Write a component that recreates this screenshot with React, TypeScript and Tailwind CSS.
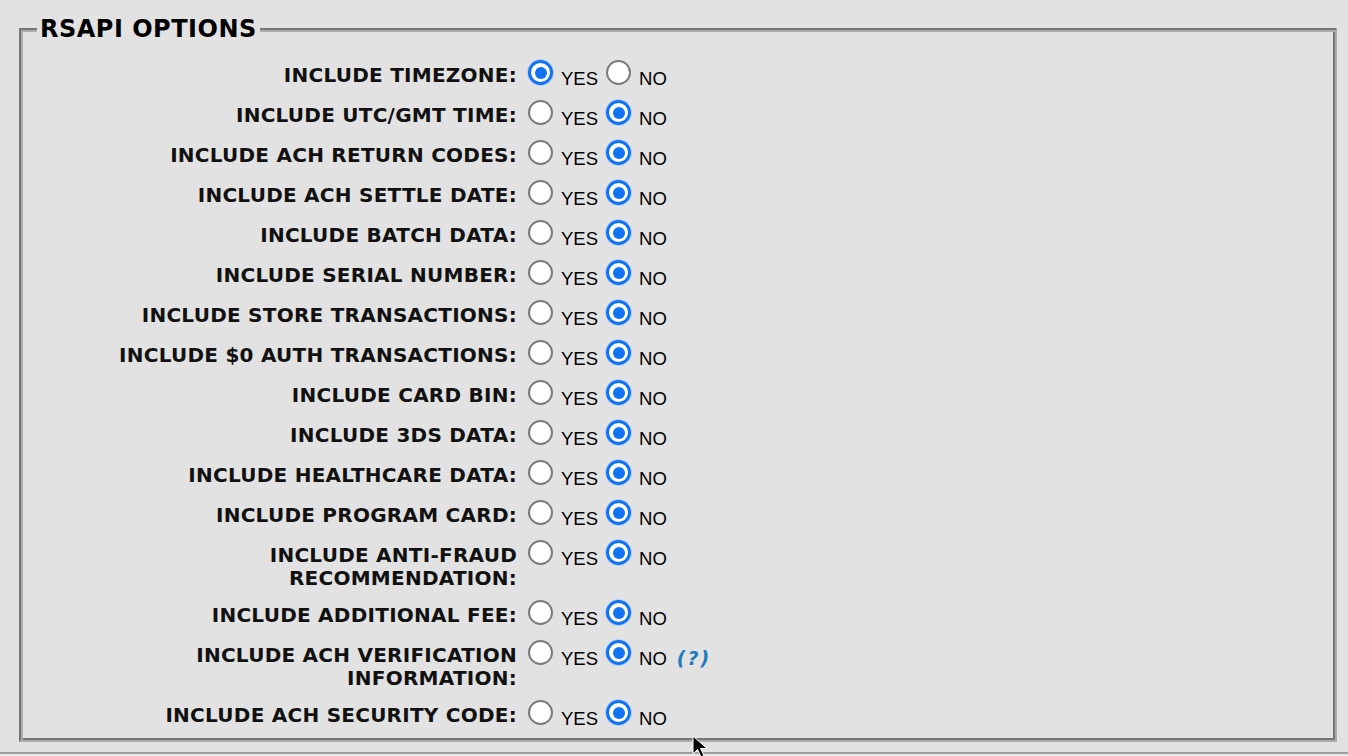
import React from 'react';

type Option = {
  label: string;
  yes: boolean;
  help?: boolean;
};

const options: Option[] = [
  { label: 'INCLUDE TIMEZONE:', yes: true },
  { label: 'INCLUDE UTC/GMT TIME:', yes: false },
  { label: 'INCLUDE ACH RETURN CODES:', yes: false },
  { label: 'INCLUDE ACH SETTLE DATE:', yes: false },
  { label: 'INCLUDE BATCH DATA:', yes: false },
  { label: 'INCLUDE SERIAL NUMBER:', yes: false },
  { label: 'INCLUDE STORE TRANSACTIONS:', yes: false },
  { label: 'INCLUDE $0 AUTH TRANSACTIONS:', yes: false },
  { label: 'INCLUDE CARD BIN:', yes: false },
  { label: 'INCLUDE 3DS DATA:', yes: false },
  { label: 'INCLUDE HEALTHCARE DATA:', yes: false },
  { label: 'INCLUDE PROGRAM CARD:', yes: false },
  { label: 'INCLUDE ANTI-FRAUD RECOMMENDATION:', yes: false },
  { label: 'INCLUDE ADDITIONAL FEE:', yes: false },
  { label: 'INCLUDE ACH VERIFICATION INFORMATION:', yes: false, help: true },
  { label: 'INCLUDE ACH SECURITY CODE:', yes: false },
];

function Radio({ checked }: { checked: boolean }) {
  if (checked) {
    return (
      <span className="flex h-[25px] w-[25px] items-center justify-center rounded-full border-[3px] border-[#1172f4] bg-white shadow-[0_0_0_1px_#b5cff2]">
        <span className="h-[12px] w-[12px] rounded-full bg-[#1172f4]"></span>
      </span>
    );
  }
  return <span className="block h-[25px] w-[25px] rounded-full border-2 border-[#7b7b7b] bg-white"></span>;
}

function OptionRow({ option }: { option: Option }) {
  return (
    <div className="flex min-h-[40px] items-start">
      <div className="ml-[76px] w-[420px] shrink-0 py-[7px] text-right font-['DejaVu_Sans',sans-serif] text-[20px] leading-[23px] font-bold tracking-[0.25px] text-[#111]">
        {option.label}
      </div>
      <div className="ml-[11px] mt-[3px]">
        <Radio checked={option.yes} />
      </div>
      <span className="ml-[8px] mt-[12px] font-['Liberation_Sans',Arial,sans-serif] text-[18.5px] leading-[20px] text-black">YES</span>
      <div className="ml-[8px] mt-[3px]">
        <Radio checked={!option.yes} />
      </div>
      <span className="ml-[8px] mt-[12px] font-['Liberation_Sans',Arial,sans-serif] text-[18.5px] leading-[20px] text-black">NO</span>
      {option.help && (
        <span className="ml-[10px] mt-[10px] font-['DejaVu_Sans',sans-serif] text-[19px] leading-[22px] font-bold italic tracking-[2px] text-[#1b7bbf]">
          (?)
        </span>
      )}
    </div>
  );
}

export default function App() {
  return (
    <div className="relative h-[756px] w-[1348px] overflow-hidden bg-[#e2e2e2] pt-[16px]">
      <fieldset className="ml-[19px] w-[1318px] border-2 border-t-[#767676] border-l-[#767676] border-b-[#ababab] border-r-[#ababab] px-0 pt-[15px] pb-[3px] shadow-[inset_2px_2px_0_#aaaaaa,inset_-2px_-2px_0_#767676]">
        <legend className="ml-[16px] bg-[#e2e2e2] px-[3px] font-['DejaVu_Sans',sans-serif] text-[24px] leading-[26px] font-bold tracking-[0.5px] text-black">
          RSAPI OPTIONS
        </legend>
        {options.map((option) => (
          <OptionRow key={option.label} option={option} />
        ))}
      </fieldset>
      <div className="mt-[10px] h-[2px] w-full bg-[#9d9d9d]"></div>
      <div className="h-[20px] w-full bg-[#e8e8e8]"></div>

      {/* mouse pointer */}
      <svg className="absolute left-[692px] top-[735px]" width="18" height="24" viewBox="0 0 18 24">
        <path d="M1 1 L1 19 L5.5 14.5 L9 22 L12 20.5 L8.5 13.5 L15 13.5 Z" fill="#000" stroke="#fff" strokeWidth="1" />
      </svg>
    </div>
  );
}
